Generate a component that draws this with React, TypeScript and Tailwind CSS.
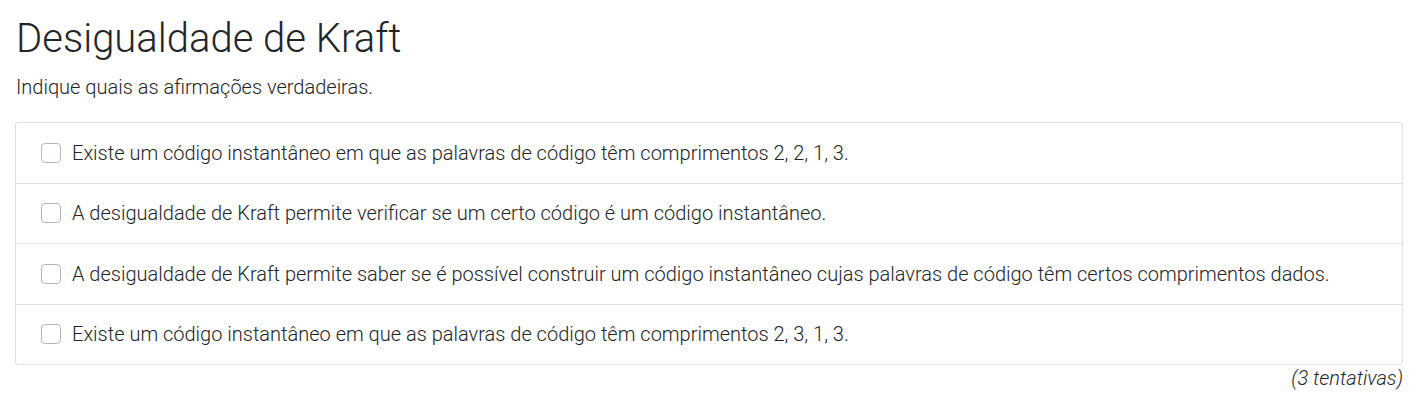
const options = [
  "Existe um código instantâneo em que as palavras de código têm comprimentos 2, 2, 1, 3.",
  "A desigualdade de Kraft permite verificar se um certo código é um código instantâneo.",
  "A desigualdade de Kraft permite saber se é possível construir um código instantâneo cujas palavras de código têm certos comprimentos dados.",
  "Existe um código instantâneo em que as palavras de código têm comprimentos 2, 3, 1, 3.",
];

export default function App() {
  return (
    <div
      className="min-h-screen bg-white text-[#212529] pl-[15px] pr-[6px] pt-[15px]"
      style={{ fontFamily: "Roboto, 'Noto Sans', sans-serif" }}
    >
      {/* Title */}
      <h1 className="text-[40px] leading-[48px] font-light pl-px">
        Desigualdade de Kraft
      </h1>
      <p className="mt-[9px] text-[20px] leading-[30px] font-light pl-px">
        Indique quais as afirmações verdadeiras.
      </p>

      {/* Options */}
      <ul className="mt-[20px] border border-[#dfdfdf] rounded-[3px]">
        {options.map((text, i) => (
          <li
            key={i}
            className={`flex items-center pl-[25px] py-[14.75px] ${
              i > 0 ? "border-t border-[#dfdfdf]" : ""
            }`}
          >
            <label className="flex items-center gap-[11px] cursor-pointer">
              <input
                type="checkbox"
                className="appearance-none w-[20px] h-[20px] rounded-[4px] border border-[#b2b8bf] bg-white shrink-0"
              />
              <span className="text-[20px] leading-[30px] font-light">
                {text}
              </span>
            </label>
          </li>
        ))}
      </ul>

      <p className="-mt-[2px] text-right text-[20px] leading-[30px] font-light italic">
        (3 tentativas)
      </p>
    </div>
  );
}
